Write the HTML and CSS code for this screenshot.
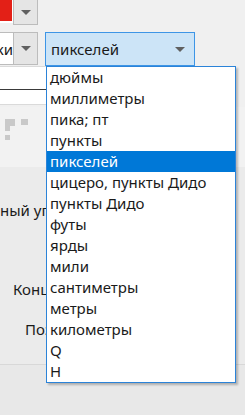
FILE: index.html
```html
<!DOCTYPE html>
<html lang="ru">
<head>
    <meta charset="UTF-8">
    <title>Единицы</title>
    <link rel="stylesheet" href="styles.css">
</head>
<body>
    <div class="panel">
        <div class="row row-top">
            <div class="swatch-box"><div class="swatch"></div></div>
            <div class="drop-btn"><span class="arrow"></span></div>
        </div>
        <div class="row row-units">
            <div class="combo-cut"><span>Точки</span></div>
            <div class="drop-btn tall"><span class="arrow"></span></div>
            <div class="combo-focus">
                <span class="combo-text">пикселей</span>
                <span class="arrow"></span>
            </div>
        </div>
        <div class="fields">
            <div class="field"></div>
            <div class="field second"></div>
        </div>
        <div class="link-icon">
            <svg width="30" height="26" viewBox="0 0 30 26">
                <rect x="5" y="5" width="10" height="7" fill="#c9c9c9"/>
                <rect x="5" y="12" width="5" height="5" fill="#c9c9c9"/>
                <rect x="21" y="5" width="7" height="6" fill="#c9c9c9"/>
                <rect x="5" y="21" width="5" height="7" fill="#c9c9c9"/>
            </svg>
        </div>
        <div class="lower">
            <div class="label-col">
                <div class="label l1">ный угол</div>
                <div class="label l2">Конце</div>
                <div class="label l3">Поз</div>
            </div>
        </div>
        <div class="footer"></div>
    </div>

    <ul class="dropdown">
        <li>дюймы</li>
        <li>миллиметры</li>
        <li>пика; пт</li>
        <li>пункты</li>
        <li class="selected">пикселей</li>
        <li>цицеро, пункты Дидо</li>
        <li>пункты Дидо</li>
        <li>футы</li>
        <li>ярды</li>
        <li>мили</li>
        <li>сантиметры</li>
        <li>метры</li>
        <li>километры</li>
        <li>Q</li>
        <li>H</li>
    </ul>
</body>
</html>
```

FILE: styles.css
```css
body {
    margin: 0;
    width: 245px;
    height: 415px;
    overflow: hidden;
    position: relative;
    font-family: "Noto Sans", "Open Sans", sans-serif;
    font-size: 15px;
    color: #1a1a1a;
    background-color: #e8e8e8;
}
.panel {
    display: flex;
    flex-direction: column;
    height: 415px;
}
.row {
    display: flex;
    background-color: #f0f0f0;
}
.row-top {
    height: 26px;
}
.swatch-box {
    width: 13px;
    height: 23px;
    background-color: #fff;
}
.swatch {
    width: 12px;
    height: 21px;
    background-color: #e32017;
}
.drop-btn {
    width: 25px;
    height: 25px;
    box-sizing: border-box;
    border: 1px solid #bcbcbc;
    border-top: none;
    background-color: #e5e5e5;
    display: flex;
    align-items: center;
    justify-content: center;
}
.drop-btn.tall {
    height: 33px;
    border-top: 1px solid #bcbcbc;
}
.arrow {
    width: 0;
    height: 0;
    border-left: 5px solid transparent;
    border-right: 5px solid transparent;
    border-top: 5px solid #606060;
}
.row-units {
    padding-top: 6px;
    height: 34px;
}
.combo-cut {
    width: 13px;
    height: 33px;
    box-sizing: border-box;
    border-top: 1px solid #bcbcbc;
    border-bottom: 1px solid #bcbcbc;
    background-color: #fff;
    overflow: hidden;
    display: flex;
    justify-content: flex-end;
    align-items: center;
}
.combo-cut span {
    white-space: nowrap;
}
.combo-focus {
    margin-left: 7px;
    width: 150px;
    height: 34px;
    box-sizing: border-box;
    border: 1px solid #3d95e6;
    background-color: #cce4f7;
    display: flex;
    align-items: center;
    justify-content: space-between;
    padding: 0 9px 0 5px;
}
.combo-text {
    margin-top: -1px;
}
.fields {
    background-color: #f0f0f0;
    padding-bottom: 2px;
}
.field {
    width: 46px;
    height: 23px;
    box-sizing: border-box;
    background-color: #fff;
    border-top: 1px solid #dadada;
}
.field.second {
    height: 16px;
    border-top: 1px solid #3a3a3a;
    border-bottom: 1px solid #dadada;
}
.link-icon {
    height: 60px;
    background-color: #f2f2f2;
}
.link-icon svg {
    display: block;
    margin-top: 7px;
}
.lower {
    height: 197px;
    background-color: #ebebeb;
    border-bottom: 1px solid #d8d8d8;
}
.label-col {
    position: relative;
    width: 46px;
    height: 100%;
    overflow: hidden;
}
.label {
    position: absolute;
    white-space: nowrap;
}
.l1 {
    left: 0;
    top: 33px;
}
.l2 {
    left: 13px;
    top: 112px;
}
.l3 {
    left: 25px;
    top: 152px;
}
.footer {
    flex: 1;
    background-color: #e8e8e8;
}
.dropdown {
    position: absolute;
    left: 46px;
    top: 66px;
    width: 190px;
    margin: 0;
    padding: 0;
    list-style: none;
    box-sizing: border-box;
    border: 1px solid #2b83d8;
    background-color: #fff;
    box-shadow: 2px 2px 2px rgba(0, 0, 0, 0.25);
}
.dropdown li {
    height: 21px;
    line-height: 20px;
    padding-left: 3px;
    white-space: nowrap;
}
.dropdown li.selected {
    background-color: #0078d7;
    color: #fff;
}
```
